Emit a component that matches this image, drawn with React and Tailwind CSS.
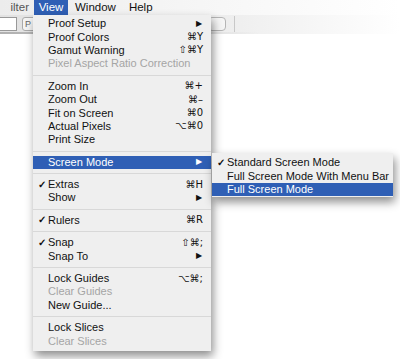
import React from "react";

const F = { fontFamily: '"Liberation Sans", Arial, sans-serif' };

function Row({ label, shortcut, check, arrow, disabled, active }) {
  return (
    <div
      className={`h-[13.4px] flex items-center whitespace-nowrap pl-[5px] pr-[8px] text-[11px] leading-none ${
        active ? "bg-[#2f5fb5] text-white" : disabled ? "text-[#a5a5a5]" : "text-[#111]"
      }`}
    >
      <span className="w-[10px] shrink-0 text-[10px] font-bold">{check ? "✓" : ""}</span>
      <span className="flex-1">{label}</span>
      {shortcut && <span className="shrink-0" style={{ fontFamily: '"DejaVu Sans", sans-serif', fontSize: "10px" }}>{shortcut}</span>}
      {arrow && <span className="shrink-0 text-[8px] mr-[1px]">▶</span>}
    </div>
  );
}

function Sep() {
  return (
    <div className="h-[9px] flex items-center">
      <div className="w-full h-px bg-[#d8d8d8]" />
    </div>
  );
}

export default function App() {
  return (
    <div className="relative w-[400px] h-[359px] bg-white overflow-hidden" style={F}>
      {/* menubar */}
      <div className="h-[15px] flex items-stretch text-[11.5px] text-[#111] bg-gradient-to-r from-[#ececec] via-[#f6f6f6] to-white">
        <div className="w-[34px] flex items-center justify-end pr-[5px] text-[#555]">ilter</div>
        <div className="w-[34px] flex items-center justify-center bg-[#2f5fb5] text-white">View</div>
        <div className="ml-[7px] flex items-center">Window</div>
        <div className="ml-[13px] flex items-center">Help</div>
      </div>
      {/* toolbar */}
      <div className="h-[19px] relative bg-gradient-to-r from-[#e2e2e2] via-[#ebebeb] to-white">
        <div className="absolute left-0 top-[2px] w-[17px] h-[14px] bg-white border border-[#999] border-l-0" />
        <div className="absolute left-[22px] top-[2px] w-[14px] h-[14px] bg-[#f4f4f4] border border-[#aaa] rounded-[3px] text-[9px] text-[#666] pl-[2px] leading-[12px]">P</div>
        <div className="absolute left-[208px] top-[2px] w-[18px] h-[14px] bg-[#f6f6f6] border border-[#b5b5b5] rounded-[4px]" />
        <div className="absolute left-[234px] top-[1px] w-px h-[16px] bg-[#c8c8c8]" />
        <div className="absolute left-0 bottom-0 w-[260px] h-[2px] bg-gradient-to-r from-[#b0b0b0] to-transparent" />
      </div>

      {/* main menu */}
      <div className="absolute left-[33px] top-[15px] w-[178px] bg-[#efefef] pt-[2px] pb-[3px] shadow-[2px_5px_9px_rgba(0,0,0,0.45)]">
        <Row label="Proof Setup" arrow />
        <Row label="Proof Colors" shortcut="⌘Y" />
        <Row label="Gamut Warning" shortcut="⇧⌘Y" />
        <Row label="Pixel Aspect Ratio Correction" disabled />
        <Sep />
        <Row label="Zoom In" shortcut="⌘+" />
        <Row label="Zoom Out" shortcut="⌘–" />
        <Row label="Fit on Screen" shortcut="⌘0" />
        <Row label="Actual Pixels" shortcut="⌥⌘0" />
        <Row label="Print Size" />
        <Sep />
        <Row label="Screen Mode" arrow active />
        <Sep />
        <Row label="Extras" shortcut="⌘H" check />
        <Row label="Show" arrow />
        <Sep />
        <Row label="Rulers" shortcut="⌘R" check />
        <Sep />
        <Row label="Snap" shortcut="⇧⌘;" check />
        <Row label="Snap To" arrow />
        <Sep />
        <Row label="Lock Guides" shortcut="⌥⌘;" />
        <Row label="Clear Guides" disabled />
        <Row label="New Guide..." />
        <Sep />
        <Row label="Lock Slices" />
        <Row label="Clear Slices" disabled />
      </div>

      {/* submenu */}
      <div className="absolute left-[212px] top-[153px] w-[181px] bg-[#efefef] pt-[3px] pb-[1px] shadow-[2px_5px_9px_rgba(0,0,0,0.45)]">
        <Row label="Standard Screen Mode" check />
        <Row label="Full Screen Mode With Menu Bar" />
        <Row label="Full Screen Mode" active />
      </div>
    </div>
  );
}
